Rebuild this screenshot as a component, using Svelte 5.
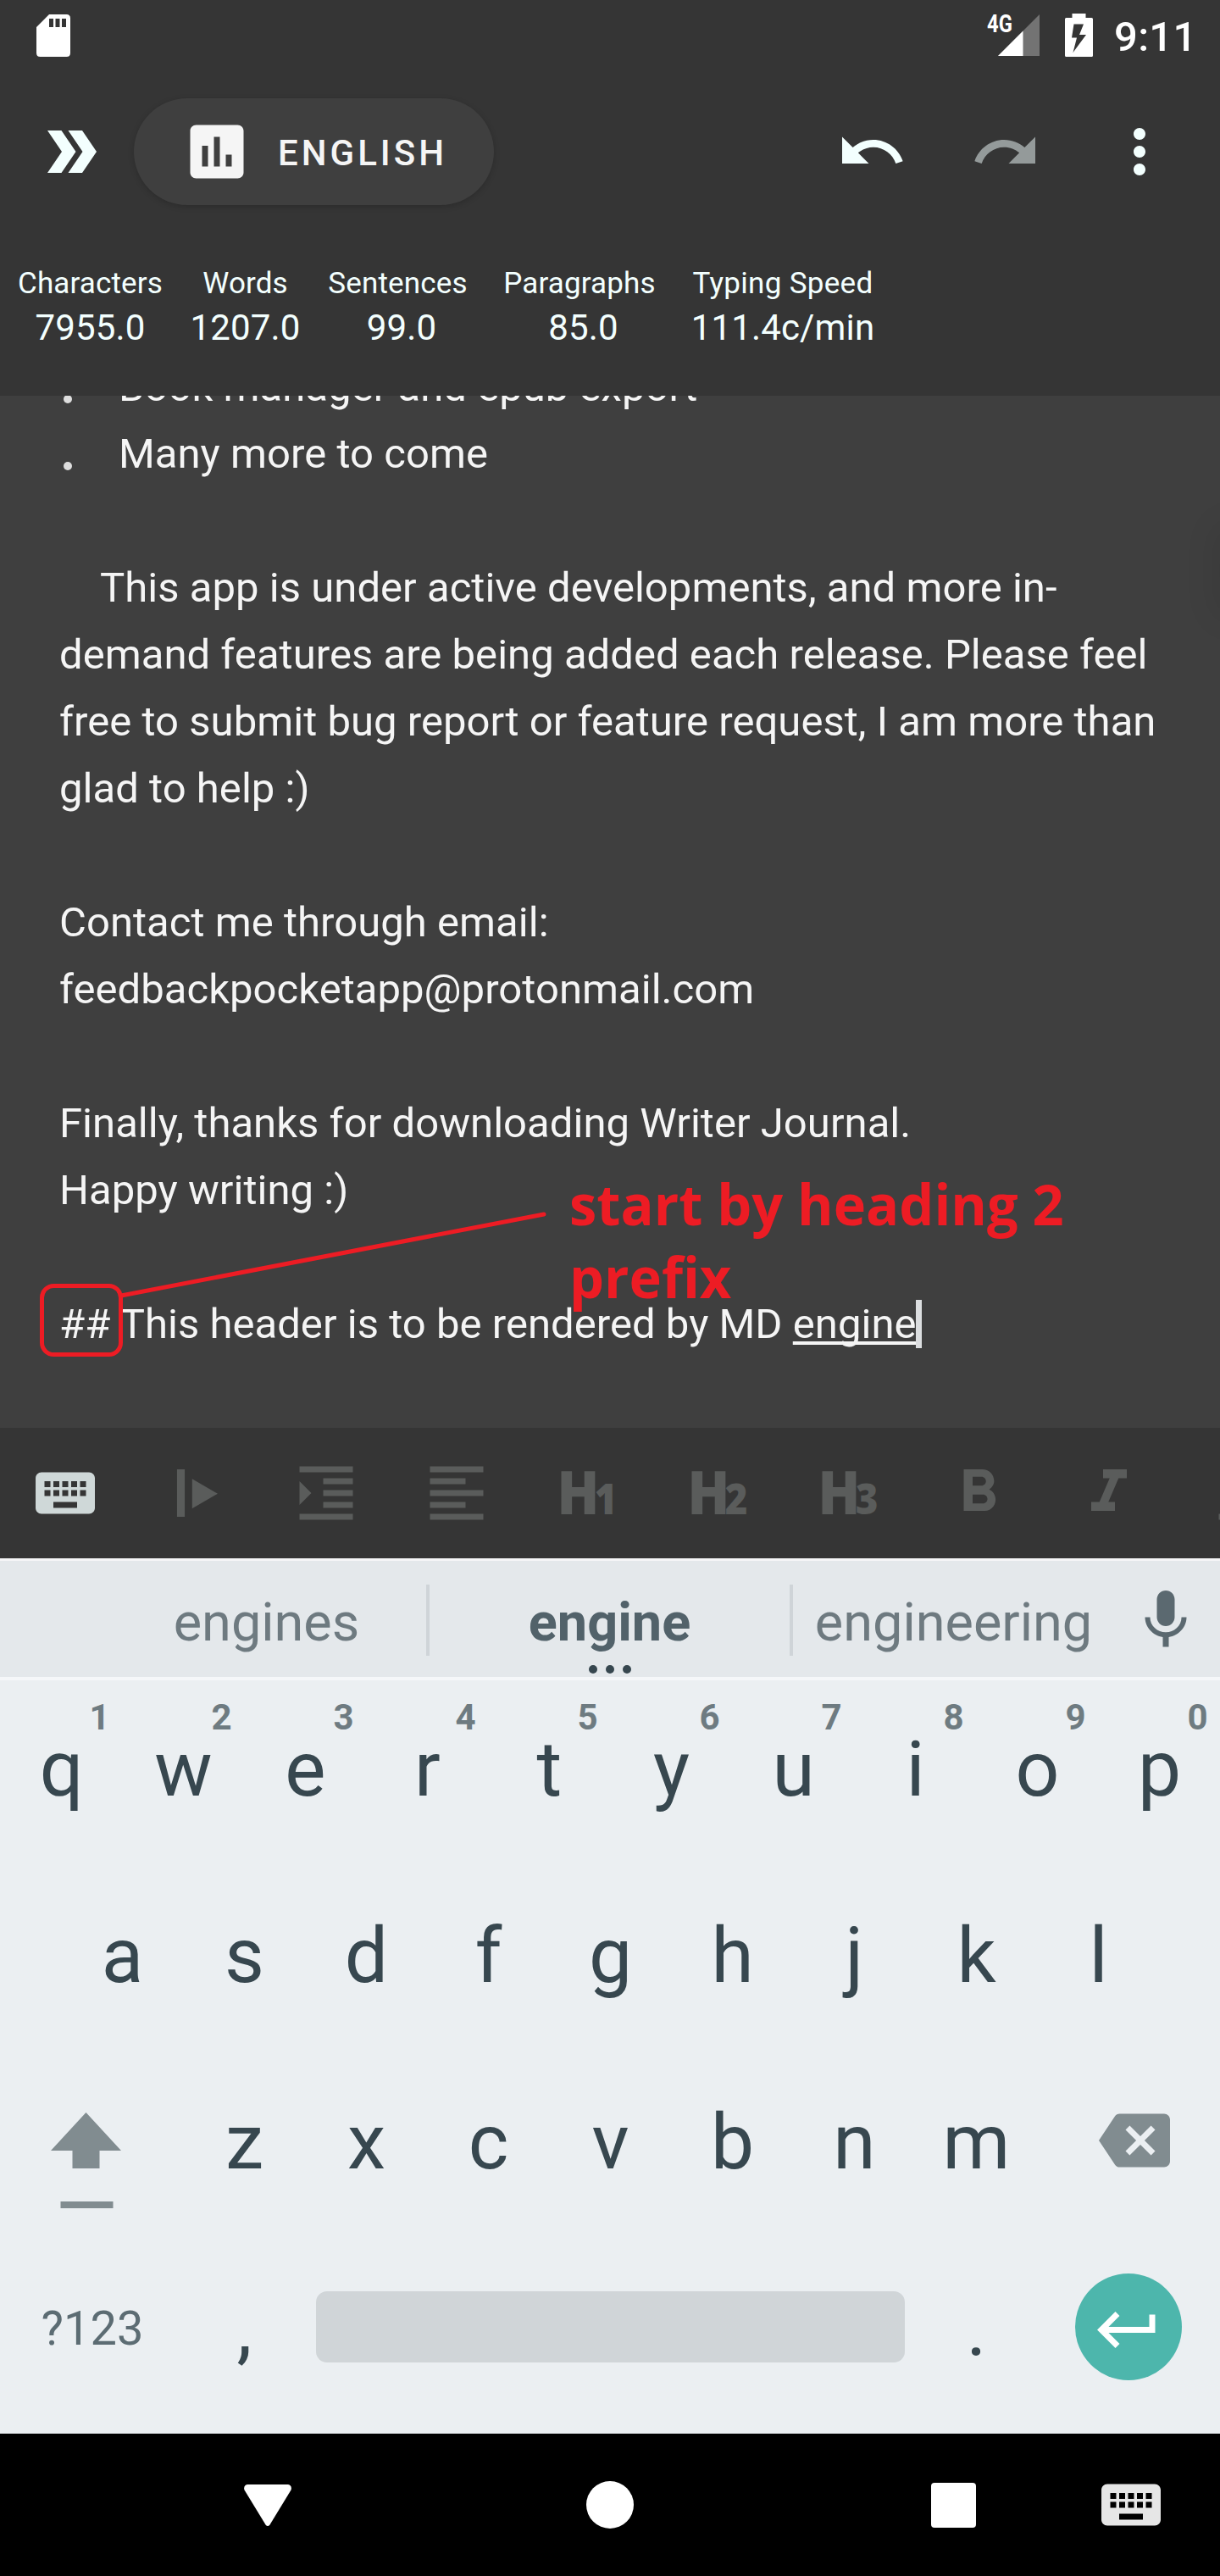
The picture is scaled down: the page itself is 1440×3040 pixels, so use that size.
<script>
  const stats = [
    { label: 'Characters', value: '7955.0', cls: 'characters' },
    { label: 'Words', value: '1207.0', cls: 'words' },
    { label: 'Sentences', value: '99.0', cls: 'sentences' },
    { label: 'Paragraphs', value: '85.0', cls: 'paragraphs' },
    { label: 'Typing Speed', value: '111.4c/min', cls: 'speed' }
  ];

  const paragraphs = [
    { text: '' },
    { text: 'This app is under active developments, and more in-', indent: true },
    { text: 'demand features are being added each release. Please feel' },
    { text: 'free to submit bug report or feature request, I am more than' },
    { text: 'glad to help :)' },
    { text: '' },
    { text: 'Contact me through email:' },
    { text: 'feedbackpocketapp@protonmail.com' },
    { text: '' },
    { text: 'Finally, thanks for downloading Writer Journal.' },
    { text: 'Happy writing :)' },
    { text: '' }
  ];

  const topRow = [...'qwertyuiop'].map((letter, i) => ({ letter, hint: (i + 1) % 10 }));
  const homeRow = [...'asdfghjkl'];
  const bottomRow = [...'zxcvbnm'];

  const icons = {
    undo: 'M12.5 8c-2.65 0-5.05.99-6.9 2.6L2 7v9h9l-3.62-3.62c1.39-1.16 3.16-1.88 5.12-1.88 3.54 0 6.55 2.31 7.6 5.5l2.37-.78C21.08 11.03 17.15 8 12.5 8z',
    redo: 'M18.4 10.6C16.55 8.99 14.15 8 11.5 8c-4.65 0-8.58 3.03-9.96 7.22L3.9 16c1.05-3.19 4.05-5.5 7.6-5.5 1.95 0 3.73.72 5.12 1.88L13 16h9V7l-3.6 3.6z',
    more: 'M12 8c1.1 0 2-.9 2-2s-.9-2-2-2-2 .9-2 2 .9 2 2 2zm0 2c-1.1 0-2 .9-2 2s.9 2 2 2 2-.9 2-2-.9-2-2-2zm0 6c-1.1 0-2 .9-2 2s.9 2 2 2 2-.9 2-2-.9-2-2-2z',
    chart: 'M19 3H5c-1.1 0-2 .9-2 2v14c0 1.1.9 2 2 2h14c1.1 0 2-.9 2-2V5c0-1.1-.9-2-2-2zM9 17H7v-7h2v7zm4 0h-2V7h2v10zm4 0h-2v-4h2v4z',
    keyboard: 'M20 5H4c-1.1 0-1.99.9-1.99 2L2 17c0 1.1.9 2 2 2h16c1.1 0 2-.9 2-2V7c0-1.1-.9-2-2-2zm-9 3h2v2h-2V8zm0 3h2v2h-2v-2zM8 8h2v2H8V8zm0 3h2v2H8v-2zm-1 2H5v-2h2v2zm0-3H5V8h2v2zm9 7H8v-2h8v2zm0-4h-2v-2h2v2zm0-3h-2V8h2v2zm3 3h-2v-2h2v2zm0-3h-2V8h2v2z',
    cursorStart: 'M5.7 4h2.6v16H5.7zM10.8 7.2v10l8.6-5z',
    indent: 'M3 21h18v-2H3v2zM3 8v8l4-4-4-4zm8 9h10v-2H11v2zM3 3v2h18V3H3zm8 6h10V7H11v2zm0 4h10v-2H11v2z',
    alignLeft: 'M15 15H3v2h12v-2zm0-8H3v2h12V7zM3 13h18v-2H3v2zm0 8h18v-2H3v2zM3 3v2h18V3H3z',
    bold: 'M15.6 10.79c.97-.67 1.65-1.77 1.65-2.79 0-2.26-1.75-4-4-4H7v14h7.04c2.09 0 3.71-1.7 3.71-3.79 0-1.52-.86-2.82-2.15-3.42zM10 6.5h3c.83 0 1.5.67 1.5 1.5s-.67 1.5-1.5 1.5h-3v-3zm3.5 9H10v-3h3.5c.83 0 1.5.67 1.5 1.5s-.67 1.5-1.5 1.5z',
    italic: 'M10 4v3h2.21l-3.42 8H6v3h8v-3h-2.21l3.42-8H18V4z',
    underline: 'M5 19v2h14v-2z',
    mic: 'M12 14c1.66 0 2.99-1.34 2.99-3L15 5c0-1.66-1.34-3-3-3S9 3.34 9 5v6c0 1.66 1.34 3 3 3zm5.3-3c0 3-2.54 5.1-5.3 5.1S6.7 14 6.7 11H5c0 3.41 2.72 6.23 6 6.72V21h2v-3.28c3.28-.48 6-3.3 6-6.72h-1.7z',
    backspace: 'M22 3H7c-.69 0-1.23.35-1.59.88L0 12l5.41 8.11c.36.53.9.89 1.59.89h15c1.1 0 2-.9 2-2V5c0-1.1-.9-2-2-2zm-3 12.59L17.59 17 14 13.41 10.41 17 9 15.59 12.59 12 9 8.41 10.41 7 14 10.59 17.59 7 19 8.41 15.41 12 19 15.59z'
  };
</script>

{#snippet icon(name)}
  <svg class="icon" viewBox="0 0 24 24" aria-hidden="true"><path d={icons[name]} /></svg>
{/snippet}

<div class="screen">
  <header class="header">
    <div class="status">
      <svg class="sd" viewBox="0 0 40 50" aria-hidden="true">
        <path fill-rule="evenodd" d="M15 0H35.500Q40 0 40 4.500V45.500Q40 50 35.500 50H4.500Q0 50 0 45.500V15ZM15 5v10h5V5zM22.500 5v10h5V5zM30 5v10h5V5z" />
      </svg>
      <div class="status-right">
        <span class="network">4G</span>
        <svg class="signal" viewBox="0 0 49 49" aria-hidden="true">
          <path class="dim" d="M49 0V49H0z" />
          <path d="M29.500 19.500V49H0z" />
        </svg>
        <svg class="battery" viewBox="0 0 33 51" aria-hidden="true">
          <path fill-rule="evenodd" d="M8.500 0h16v5H31.500Q33 5 33 6.500V49.500Q33 51 31.500 51H1.500Q0 51 0 49.500V6.500Q0 5 1.500 5H8.500zM10.500 12.500L8 28.500H14L9.500 46L25 25H17L22 12.500z" />
        </svg>
        <span class="clock">9:11</span>
      </div>
    </div>

    <div class="appbar">
      <svg class="chevrons" viewBox="0 0 58 50" aria-hidden="true">
        <path d="M0 0H16.500L33.500 25L16.500 50H0L17 25zM24.500 0H41L58 25L41 50H24.500L41.500 25z" />
      </svg>
      <div class="pill">
        {@render icon('chart')}
        <span>ENGLISH</span>
      </div>
      <div class="actions">
        {@render icon('undo')}
        <span class="disabled">{@render icon('redo')}</span>
        {@render icon('more')}
      </div>
    </div>

    <div class="stats">
      {#each stats as s}
        <div class="stat {s.cls}">
          <span class="label">{s.label}</span>
          <span class="value">{s.value}</span>
        </div>
      {/each}
    </div>
  </header>

  <main class="editor">
    <div class="side-handle"></div>
    <div class="text">
      <div class="line item"><i class="bullet"></i><span>Book manager and epub export</span></div>
      <div class="line item"><i class="bullet"></i><span>Many more to come</span></div>
      {#each paragraphs as p}
        <div class="line" class:indent={p.indent}>{p.text}</div>
      {/each}
      <div class="line">## This header is to be rendered by MD <span class="composing">engine</span><i class="caret"></i></div>
    </div>

    <svg class="markup" viewBox="0 0 1440 1218" aria-hidden="true">
      <rect x="49.500" y="1050.500" width="93" height="81" rx="14" />
      <path d="M143 1062L642 966" />
    </svg>
    <div class="note">start by heading 2<br />prefix</div>
  </main>

  <nav class="tools">
    <span class="tool active">{@render icon('keyboard')}</span>
    <span class="tool">{@render icon('cursorStart')}</span>
    <span class="tool">{@render icon('indent')}</span>
    <span class="tool">{@render icon('alignLeft')}</span>
    {#each [1, 2, 3] as level}
      <span class="tool heading"><b>H</b><b class="level">{level}</b></span>
    {/each}
    <span class="tool">{@render icon('bold')}</span>
    <span class="tool">{@render icon('italic')}</span>
    <span class="tool">{@render icon('underline')}</span>
  </nav>

  <section class="keyboard">
    <div class="suggestions">
      <span class="word first">engines</span>
      <i class="divider"></i>
      <span class="word main">engine<span class="dots"><i></i><i></i><i></i></span></span>
      <i class="divider"></i>
      <span class="word">engineering</span>
      <span class="mic">{@render icon('mic')}</span>
    </div>

    <div class="rows">
      <div class="row">
        {#each topRow as k}
          <span class="key">{k.letter}<sup class="hint">{k.hint}</sup></span>
        {/each}
      </div>
      <div class="row">
        {#each homeRow as k}<span class="key">{k}</span>{/each}
      </div>
      <div class="row">
        <span class="key wide shift">
          <svg viewBox="0 0 83 113" aria-hidden="true">
            <path d="M41.500 0L83 45H57.500V66H25.500V45H0zM11.500 105h62v8h-62z" />
          </svg>
        </span>
        {#each bottomRow as k}<span class="key">{k}</span>{/each}
        <span class="key wide delete">{@render icon('backspace')}</span>
      </div>
      <div class="row">
        <span class="key wide symbols">?123</span>
        <span class="key">,</span>
        <span class="key space"><i></i></span>
        <span class="key">.</span>
        <span class="key wide enter">
          <svg viewBox="0 0 126 126" aria-hidden="true">
            <circle cx="63" cy="63" r="63" />
            <path d="M91 48.500V66.500H32M50 47.500L31 66.500L50 85.500" />
          </svg>
        </span>
      </div>
    </div>
  </section>

  <footer class="navbar">
    <svg class="back" viewBox="0 0 56 49" aria-hidden="true"><path d="M4 0H52Q57 1 55.500 6.500L30.500 47.500Q28 50.500 25.500 47.500L.5 6.500Q-1 1 4 0z" /></svg>
    <i class="home"></i>
    <i class="recent"></i>
    <span class="ime">{@render icon('keyboard')}</span>
  </footer>
</div>

<style>
  :global(body) {
    margin: 0;
  }

  .screen {
    display: flex;
    flex-direction: column;
    width: 1440px;
    height: 3040px;
    overflow: hidden;
    background: #3f3f3f;
    font-family: Roboto, 'Liberation Sans', sans-serif;
    font-weight: 400;
  }

  svg {
    display: block;
    flex: none;
    fill: currentColor;
  }

  .icon {
    width: 84px;
    height: 84px;
  }

  /* Header */
  .header {
    position: relative;
    z-index: 1;
    flex: none;
    height: 467px;
    background: #353535;
    color: #f3fffe;
  }

  .status {
    display: flex;
    justify-content: space-between;
    height: 84px;
    box-sizing: border-box;
    padding: 0 32px 0 43px;
    color: #fff;
  }

  .sd {
    width: 40px;
    height: 50px;
    margin-top: 17px;
  }

  .status-right {
    display: flex;
    align-items: flex-start;
  }

  .network {
    width: 13px;
    margin-top: 14px;
    font-size: 29px;
    line-height: 29px;
    font-weight: 700;
    transform: scaleX(0.82);
    transform-origin: left;
  }

  .signal {
    width: 49px;
    height: 49px;
    margin-top: 17px;
  }

  .dim {
    fill: #737373;
  }

  .battery {
    width: 33px;
    height: 51px;
    margin: 16px 0 0 30px;
  }

  .clock {
    width: 93px;
    margin: 15px 0 0 25px;
    font-size: 49px;
    line-height: 58px;
    font-weight: 500;
    letter-spacing: 0.3px;
  }

  .appbar {
    display: flex;
    align-items: center;
    height: 190px;
    padding-left: 56px;
  }

  .chevrons {
    width: 58px;
    height: 50px;
  }

  .pill {
    display: flex;
    align-items: center;
    box-sizing: border-box;
    width: 425px;
    height: 126px;
    margin-left: 44px;
    padding-left: 56px;
    border-radius: 63px;
    background: #3f3f3f;
    color: #f5f5f5;
    font-size: 42px;
    font-weight: 500;
    letter-spacing: 4px;
    box-shadow: 0 2px 7px rgba(0, 0, 0, 0.18);
  }

  .pill span {
    margin: 2px 0 0 30px;
  }

  .actions {
    display: flex;
    gap: 74px;
    margin-left: 404px;
  }

  .disabled {
    color: #949a9a;
  }

  .stats {
    display: flex;
    padding: 37px 0 0 21px;
    letter-spacing: 0.15px;
  }

  .stat {
    display: flex;
    flex-direction: column;
    align-items: center;
    white-space: nowrap;
  }

  .characters { width: 171px; }
  .words { width: 131px; margin-left: 32px; }
  .sentences { width: 165px; margin-left: 32px; }
  .paragraphs { width: 180px; margin-left: 42px; }
  .speed { width: 216px; margin-left: 42px; }

  .label {
    font-size: 35px;
    line-height: 47px;
  }

  .speed .label {
    letter-spacing: 0.3px;
  }

  .value {
    font-size: 42px;
    line-height: 58px;
  }

  .sentences .value,
  .paragraphs .value {
    padding-left: 9px;
  }

  /* Editor */
  .editor {
    position: relative;
    flex: none;
    height: 1218px;
    overflow: hidden;
    color: #f5f5f5;
  }

  .side-handle {
    position: absolute;
    top: 152px;
    right: -30px;
    width: 30px;
    height: 100px;
    border-radius: 20px;
    box-shadow: 0 5px 36px 8px rgba(0, 0, 0, 0.08);
  }

  .text {
    margin-top: -50px;
    padding-left: 70px;
    font-size: 49px;
    line-height: 79px;
    letter-spacing: 0.04px;
  }

  .line {
    display: flex;
    height: 79px;
    white-space: pre;
  }

  .indent {
    padding-left: 48px;
  }

  .item {
    align-items: center;
  }

  .bullet {
    width: 10px;
    height: 10px;
    margin: 28px 55px 0 5px;
    border-radius: 50%;
    background: #dedede;
  }

  .composing {
    text-decoration: underline;
    text-decoration-thickness: 3.500px;
    text-underline-offset: 4px;
    text-decoration-skip-ink: none;
  }

  .caret {
    width: 7px;
    height: 57px;
    margin: 11px 0 0 -1px;
    background: #dcdee0;
  }

  .markup {
    position: absolute;
    inset: 0;
    width: 1440px;
    height: 1218px;
    fill: none;
    stroke: #ed1c24;
    stroke-width: 5;
    stroke-linecap: round;
  }

  .note {
    position: absolute;
    left: 672px;
    top: 910px;
    color: #ed1c24;
    font: 700 67px/86px 'Open Sans', 'Noto Sans', sans-serif;
    white-space: nowrap;
    transform: scaleX(0.969);
    transform-origin: left;
  }

  /* Formatting toolbar */
  .tools {
    display: flex;
    flex: none;
    height: 154px;
    overflow: hidden;
    background: #353535;
    color: #5a5c5b;
  }

  .tool {
    display: flex;
    flex: 0 0 154px;
    align-items: center;
    justify-content: center;
  }

  .active {
    color: #cfd8d8;
  }

  .heading {
    align-items: baseline;
    font: 700 70px/151px 'Open Sans', 'Noto Sans', sans-serif;
    transform: scaleX(0.93);
  }

  .level {
    margin-left: -6px;
    font-size: 49px;
  }

  /* Keyboard */
  .keyboard {
    flex: none;
    height: 1033px;
    background: #ebeff2;
    color: #37474f;
  }

  .suggestions {
    display: flex;
    align-items: center;
    height: 137px;
    border-top: 3px solid #f5f5f7;
    border-bottom: 4px solid #f5f7f9;
    background: #e4e8eb;
    color: #6e7a80;
    font-size: 63px;
    line-height: 140px;
  }

  .word {
    position: relative;
    top: 4px;
    flex: 0 0 379px;
    text-align: center;
  }

  .first {
    margin-left: 124px;
    text-indent: 2px;
  }

  .main {
    flex-basis: 425px;
    color: #52626a;
    font-weight: 700;
  }

  .dots {
    position: absolute;
    left: 0;
    right: 0;
    top: 120px;
    display: flex;
    justify-content: center;
    gap: 10px;
  }

  .dots i {
    width: 10px;
    height: 10px;
    border-radius: 50%;
    background: #37474f;
  }

  .divider {
    flex: 0 0 4px;
    height: 84px;
    margin-top: 3px;
    background: #cfd4d8;
  }

  .mic {
    margin: 3px 0 0 19px;
    color: #5b6970;
  }

  .rows {
    padding-bottom: 14px;
  }

  .row {
    display: flex;
    justify-content: center;
    height: 220px;
  }

  .row:first-child {
    margin-top: -5px;
  }

  .key {
    position: relative;
    display: flex;
    flex: 0 0 144px;
    align-items: center;
    justify-content: center;
    font-size: 91px;
    line-height: 220px;
    text-indent: 1px;
  }

  .hint {
    position: absolute;
    top: 24px;
    left: 96px;
    width: 42px;
    color: #6e7b81;
    font-size: 42px;
    line-height: 50px;
    font-weight: 700;
    text-align: center;
  }

  .wide {
    flex-basis: 216px;
  }

  .shift,
  .delete {
    color: #818c90;
  }

  .shift svg {
    width: 83px;
    height: 113px;
    margin: 43px 14px 0 0;
  }

  .delete .icon {
    margin: -5px 0 0 14px;
  }

  .symbols {
    color: #5c6c73;
    font-size: 56px;
    line-height: 218px;
    text-indent: 2px;
  }

  .space {
    flex-basis: 720px;
  }

  .space i {
    width: 695px;
    height: 84px;
    margin-bottom: 4px;
    border-radius: 13px;
    background: #d0d5d8;
  }

  .enter svg {
    width: 126px;
    height: 126px;
    margin-bottom: 4px;
    fill: #4db6ac;
  }

  .enter path {
    fill: none;
    stroke: #fff;
    stroke-width: 7;
  }

  /* System navigation */
  .navbar {
    display: flex;
    flex: none;
    align-items: center;
    height: 168px;
    background: #000;
    color: #fff;
  }

  .back {
    width: 56px;
    height: 49px;
    margin-left: 288px;
  }

  .home {
    width: 56px;
    height: 56px;
    margin-left: 348px;
    border-radius: 50%;
    background: #fff;
  }

  .recent {
    width: 53px;
    height: 53px;
    margin-left: 351px;
    border-radius: 4px;
    background: #fff;
  }

  .ime {
    margin-left: 141px;
    color: #e6e6e6;
  }
</style>
